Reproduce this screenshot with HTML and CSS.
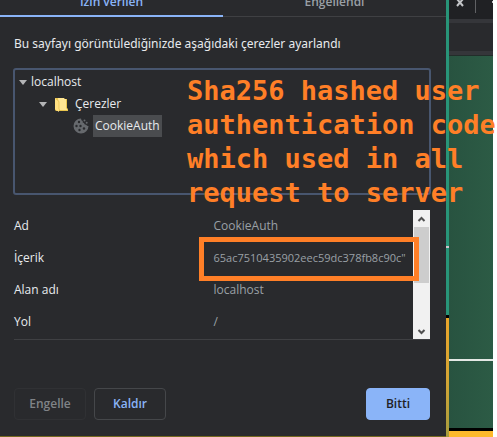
FILE: index.html
```html
<!DOCTYPE html>
<html lang="tr">
<head>
<meta charset="utf-8">
<title>Çerezler</title>
<link rel="stylesheet" href="styles.css">
</head>
<body>
<div class="screen">
  <main class="dialog">
    <div class="tabs" role="tablist">
      <button class="tab tab-active" role="tab" aria-selected="true">İzin verilen</button>
      <button class="tab" role="tab" aria-selected="false">Engellendi</button>
    </div>
    <p class="intro">Bu sayfayı görüntülediğinizde aşağıdaki çerezler ayarlandı</p>
    <ul class="tree">
      <li class="node">
        <svg class="arrow" viewBox="0 0 8 5"><path d="M0 0h8L4 5z"/></svg>
        <span>localhost</span>
      </li>
      <li class="node level-2">
        <svg class="arrow" viewBox="0 0 8 5"><path d="M0 0h8L4 5z"/></svg>
        <svg class="folder" viewBox="0 0 13 15">
          <path d="M0 1h9l1 1h2v9l1 1v2H1L0 13z" fill="#e9c54e"/>
          <path d="M3 1h6v1h2v9l1 1v1H4z" fill="#ffe694"/>
          <path d="M0 1l4 3v11l-4-3z" fill="#ffe082"/>
          <path d="M0.500 1.500l3.500 3v7.500l1 1.500" fill="none" stroke="#dfb63e" stroke-width=".6"/>
        </svg>
        <span>Çerezler</span>
      </li>
      <li class="node level-3">
        <svg class="cookie" viewBox="0 0 16 16">
          <path d="M8 0.500a7.500 7.500 0 1 0 7.500 7.500q-1.600.2-2.300-1.200-2 .2-2.200-1.800-1.800-.2-1.300-2-1.700-.5-1.700-2.500z" fill="#66696d"/>
          <g fill="#66696d"><circle cx="11.500" cy="2.500" r="1"/><circle cx="13.700" cy="4.800" r="1"/></g>
          <g fill="#292a2d"><circle cx="6" cy="4" r="1.200"/><circle cx="3.500" cy="8" r="1.200"/><circle cx="7.500" cy="8" r="1.200"/><circle cx="6.500" cy="12" r="1.200"/><circle cx="11" cy="10.500" r="1.200"/></g>
        </svg>
        <span class="selected">CookieAuth</span>
      </li>
    </ul>
    <section class="details">
      <dl class="fields">
        <div class="field"><dt>Ad</dt><dd>CookieAuth</dd></div>
        <div class="field"><dt>İçerik</dt><dd class="hash">65ac7510435902eec59dc378fb8c90c"</dd></div>
        <div class="field"><dt>Alan adı</dt><dd>localhost</dd></div>
        <div class="field"><dt>Yol</dt><dd>/</dd></div>
      </dl>
      <div class="scrollbar">
        <svg class="scroll-arrow" viewBox="0 0 17 17"><path d="M5.500 11l3-3 3 3"/></svg>
        <div class="thumb"></div>
        <svg class="scroll-arrow" viewBox="0 0 17 17"><path d="M5.500 8l3 3 3-3"/></svg>
      </div>
    </section>
    <div class="actions">
      <button class="button" disabled>Engelle</button>
      <button class="button remove">Kaldır</button>
      <button class="button done">Bitti</button>
    </div>
  </main>
  <div class="edge">
    <div class="edge-teal"></div>
    <div class="edge-line"></div>
    <div class="edge-teal-lower"></div>
    <div class="edge-black"></div>
    <div class="edge-gold"></div>
  </div>
  <div class="backdrop">
    <div class="window-tabs">
      <svg class="close" viewBox="0 0 8 8"><path d="M1 -1l6 7M7 -1L1 6"/></svg>
      <span class="divider"></span>
      <span class="plus"></span>
    </div>
    <div class="toolbar"></div>
    <div class="board"></div>
    <div class="board-lower"></div>
    <div class="board-base"></div>
  </div>
</div>
<div class="highlight"></div>
<p class="note">Sha256 hashed user<br>authentication code<br>which used in all<br>request to server</p>
</body>
</html>
```
FILE: styles.css
```css
* { box-sizing: border-box; }
body {
  margin: 0;
  background: #fff;
  color: #e8eaed;
  font: 12px/16px "Open Sans", "Noto Sans", sans-serif;
  overflow: hidden;
}
.screen {
  display: grid;
  grid-template-columns: 1fr 3px 44px;
  min-height: 100vh;
  padding-right: 4px;
}
.dialog {
  display: flex;
  flex-direction: column;
  background: #292a2d;
  border-bottom: 1px solid #75691f;
  min-width: 0;
}
.tabs {
  display: flex;
  align-items: flex-end;
  height: 17px;
  overflow: hidden;
}
.tab {
  flex: 1;
  height: 32px;
  padding: 9px 0 0;
  border: 0;
  border-bottom: 1px solid #3f4043;
  background: none;
  color: #9aa0a6;
  font: 600 12px/16px "Open Sans", sans-serif;
  display: flex;
  justify-content: center;
}
.tab-active {
  border-bottom: 2px solid #8ab4f8;
  color: #8ab4f8;
}
.intro { margin: 19px 14px 16px; font-family: "Noto Sans", sans-serif; white-space: nowrap; }
.tree {
  height: 127px;
  margin: 0 15px 0 13px;
  padding: 1px 4px;
  border: 2px solid #48566f;
  border-radius: 3px;
  list-style: none;
}
.node { display: flex; align-items: center; height: 22px; }
.level-2 { padding-left: 20px; }
.level-3 { padding-left: 54px; }
.arrow { width: 8px; height: 5px; margin-right: 4px; fill: #b4b5b7; }
.folder { width: 13px; height: 15px; margin: 0 7px 0 4px; }
.cookie { width: 16px; height: 16px; margin-right: 4px; }
.selected { padding: 3px 2px; background: #4a4c4f; }
.details {
  display: flex;
  height: 130px;
  margin: 15px 16px 0 14px;
  border-bottom: 1px solid #3f4043;
}
.fields { flex: 1; margin: 0; min-width: 0; }
.field { display: grid; grid-template-columns: repeat(2, minmax(0, 1fr)); height: 32px; align-items: center; }
.field dt { margin: 0; }
.field dd { margin: 0; color: #9aa0a6; white-space: nowrap; }
.field .hash { font-size: 11px; }
.scrollbar { display: flex; flex-direction: column; width: 17px; background: #f1f1f1; }
.scroll-arrow { width: 17px; height: 17px; fill: none; stroke: #505050; stroke-width: 2; }
.scroll-arrow:last-child { margin-top: auto; }
.thumb { height: 56px; margin: 0 1px; background: #cdcdcd; }
.actions { display: flex; gap: 8px; margin: auto 16px 16px 14px; }
.button {
  min-width: 72px;
  height: 32px;
  padding: 0;
  border: 1px solid #303134;
  border-radius: 4px;
  background: none;
  color: #808387;
  font: 600 12px/16px "Open Sans", sans-serif;
}
.remove { border-color: #45474a; color: #8ab4f8; }
.done { min-width: 64px; margin-left: auto; border-color: #8ab4f8; background: #8ab4f8; color: #202124; }
.edge { display: flex; flex-direction: column; }
.edge-teal { height: 246px; background: #289478; }
.edge-line { height: 2px; background: #d0c4cc; }
.edge-teal-lower { height: 67px; background: #289478; }
.edge-black { height: 3px; background: #000; }
.edge-gold { flex: 1; background: linear-gradient(#e9a52b, #d5a534 50%, #a69c3e); }
.backdrop { display: flex; flex-direction: column; }
.window-tabs { display: flex; height: 19px; background: #202124; }
.close { width: 8px; height: 8px; margin-left: 7px; stroke: #c4c6c9; stroke-width: 2; }
.divider { width: 1px; height: 13px; margin-left: 11px; background: #606164; }
.plus { width: 1px; height: 2px; margin: 1px 0 0 auto; background: #c4c6c9; }
.toolbar { height: 36px; border: solid #35363a; border-width: 4px 0; background: #292a2d; }
.board { height: 304px; border-top: 1px solid #222d2a; background: linear-gradient(90deg, #285340, #2c5b45); }
.board-lower { flex: 1; border-top: 2px solid #e4e8e5; background: linear-gradient(90deg, #285340, #2c5b45); }
.board-base { height: 9px; border-top: 3px solid #000; background: #fdb92b; }
.highlight {
  position: absolute;
  left: 199px;
  top: 237px;
  width: 220px;
  height: 44px;
  border: 5px solid #ff7f27;
}
.note {
  position: absolute;
  left: 187px;
  top: 74px;
  margin: 0;
  color: #ff7f27;
  font: bold 27px/34px "DejaVu Sans Mono", monospace;
  white-space: nowrap;
}
```
